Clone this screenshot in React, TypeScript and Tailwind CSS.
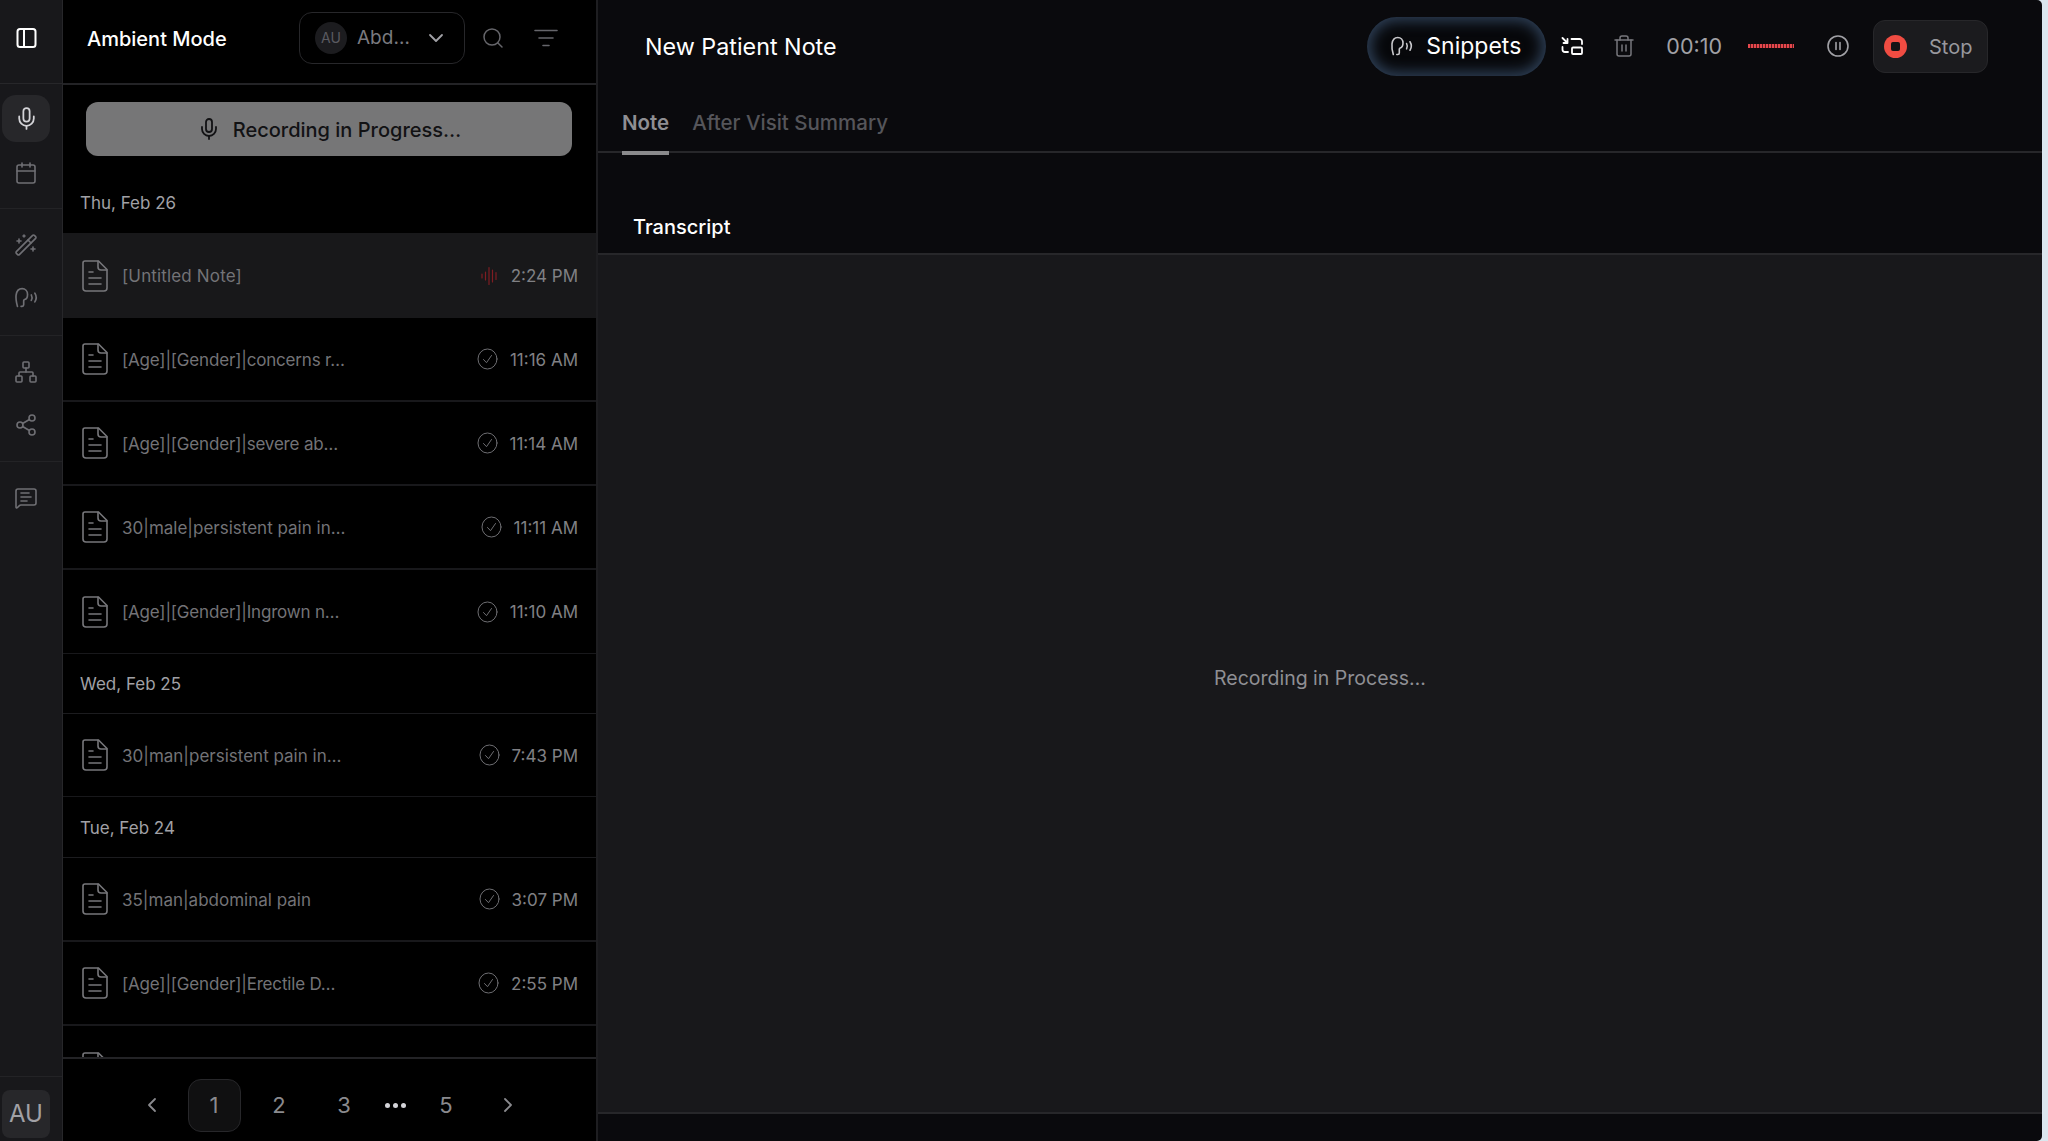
import React from "react";
import { Mic, Calendar, WandSparkles, Network, Share2, MessageSquareText, Search, ChevronDown, ChevronLeft, ChevronRight, Trash2 } from "lucide-react";

function Head({ className }: { className?: string }) {
  return (
    <svg viewBox="0 0 24 24" fill="none" stroke="currentColor" strokeWidth="1.6" strokeLinecap="round" strokeLinejoin="round" className={className}>
      <path d="M3.3 20.5C2.2 16.5 1.6 13 2 9.8 2.5 5.8 4.8 3.5 7.8 3.5c3 0 5.2 2.2 5.2 5.5 0 2.7-1 4.4-2.8 5-.6.2-.9.6-.9 1.2V19c0 1-.6 1.5-1.5 1.5h-1" />
      <path d="M16.6 9.5c.9 1.7.9 3.6 0 5.3" />
      <path d="M20 7.8c1.7 2.7 1.7 5.7 0 8.4" />
    </svg>
  );
}

function DocIcon() {
  return (
    <svg viewBox="0 0 26 32" fill="none" stroke="currentColor" strokeWidth="1.6" strokeLinecap="round" strokeLinejoin="round" className="w-[26px] h-[32px] shrink-0 text-[#77777b]">
      <path d="M3 1h13.5L25 9.5V28a3 3 0 0 1-3 3H4a3 3 0 0 1-3-3V3a2 2 0 0 1 2-2Z" />
      <path d="M16 1.2V7a3 3 0 0 0 3 3h5.8" />
      <path d="M7 12h4M7 18h12M7 24h12" />
    </svg>
  );
}

function CheckIcon() {
  return (
    <svg viewBox="0 0 20 22" fill="none" stroke="currentColor" strokeWidth="1" strokeLinecap="round" strokeLinejoin="round" className="w-[21px] h-[22px] shrink-0 text-[#6e6e72]">
      <ellipse cx="10" cy="11" rx="9.5" ry="10" />
      <path d="M6 11.5l3 3.2 5-7.2" />
    </svg>
  );
}

function WaveIcon() {
  return (
    <svg viewBox="0 0 16 18" fill="none" stroke="currentColor" strokeWidth="1.2" strokeLinecap="round" className="w-[18px] h-[18px] shrink-0 text-[#7f1d22]">
      <path d="M1 7v4M4.5 5v8M8 .6v16.8M11.5 3v12M15 5.5v7" />
    </svg>
  );
}

function SwapIcon() {
  return (
    <svg viewBox="0 0 22 18" fill="none" stroke="currentColor" strokeWidth="1.8" strokeLinecap="round" strokeLinejoin="round" className="w-[22px] h-[18px] text-white">
      <path d="M1.5 1l5 5M6.5 2v4h-4" />
      <path d="M10.5 2h8a2.5 2.5 0 0 1 2.5 2.5V7" />
      <path d="M1.5 10v2.5A2.5 2.5 0 0 0 4 15h3" />
      <rect x="11" y="10.5" width="10" height="6.5" rx="1" />
    </svg>
  );
}

function SideIcon({ children, active }: { children: React.ReactNode; active?: boolean }) {
  return (
    <div className={`w-[48px] h-[47px] flex items-center justify-center rounded-[14px] ${active ? "bg-[#27272a] text-[#d4d4d8]" : "text-[#6f6f74]"}`}>
      {children}
    </div>
  );
}

type Row = { title: string; time: string; size: string };

function NoteRow({ title, time, size }: Row) {
  return (
    <div className={`flex items-center pl-[19px] pr-[18px] border-[#18181b] ${size}`}>
      <DocIcon />
      <span className={`ml-[14px] flex-1 text-[17px] text-[#737377] whitespace-nowrap pt-[3px] ${title.startsWith("[") ? "tracking-[-0.18px]" : ""}`}>{title}</span>
      <CheckIcon />
      <span className="ml-[12px] text-[17px] text-[#808084] whitespace-nowrap pt-[3px]">{time}</span>
    </div>
  );
}

function DateRow({ label, size }: { label: string; size: string }) {
  return (
    <div className={`flex items-center px-[17px] pt-[3px] text-[17px] text-[#a1a1a6] border-[#1c1c1f] ${size}`}>{label}</div>
  );
}

function PageBtn({ children, active, width }: { children: React.ReactNode; active?: boolean; width: string }) {
  return (
    <div className={`h-[53px] flex items-center justify-center rounded-[13px] text-[22px] text-[#8a8a8e] ${width} ${active ? "bg-[#101011] border border-[#27272a]" : ""}`}>
      {children}
    </div>
  );
}

export default function App() {
  return (
    <div className="w-[2048px] h-[1141px] bg-[#dbe6ee] overflow-hidden font-[Inter,sans-serif]">
      <div className="w-[2042px] h-full flex rounded-r-[5px] overflow-hidden">
        {/* Rail */}
        <aside className="w-[63px] shrink-0 bg-[#18181b] border-r border-[#27272a] flex flex-col pl-[2px]">
          <div className="-ml-[2px] pl-[2px] h-[84px] border-b border-[#27272a] flex items-center shrink-0">
            <div className="w-[48px] flex justify-center pb-[8px]">
              <svg viewBox="0 0 20 20" fill="none" stroke="currentColor" strokeWidth="2" className="w-[21px] h-[20px] text-white">
                <rect x="1" y="1" width="18" height="18" rx="2.5" />
                <path d="M7.5 1v18" />
              </svg>
            </div>
          </div>
          <div className="-ml-[2px] pl-[2px] h-[125px] pt-[11px] border-b border-[#232326] flex flex-col gap-[7px] shrink-0">
            <SideIcon active><Mic size={25} strokeWidth={1.7} /></SideIcon>
            <SideIcon><Calendar size={24} strokeWidth={1.6} /></SideIcon>
          </div>
          <div className="-ml-[2px] pl-[2px] h-[127px] pt-[12px] border-b border-[#232326] flex flex-col gap-[6px] shrink-0">
            <SideIcon><WandSparkles size={24} strokeWidth={1.6} /></SideIcon>
            <SideIcon><Head className="w-[25px] h-[25px]" /></SideIcon>
          </div>
          <div className="-ml-[2px] pl-[2px] h-[126px] pt-[12px] border-b border-[#232326] flex flex-col gap-[6px] shrink-0">
            <SideIcon><Network size={24} strokeWidth={1.6} /></SideIcon>
            <SideIcon><Share2 size={24} strokeWidth={1.6} /></SideIcon>
          </div>
          <div className="flex-1 pt-[12px]">
            <SideIcon><MessageSquareText size={24} strokeWidth={1.6} /></SideIcon>
          </div>
          <div className="-ml-[2px] pl-[2px] h-[65px] pt-[10px] border-t border-[#232326] flex items-center shrink-0">
            <div className="w-[48px] h-[48px] rounded-[8px] bg-[#27272a] flex items-center justify-center text-[24px] text-[#a1a1a6]">AU</div>
          </div>
        </aside>

        {/* List */}
        <section className="w-[533px] shrink-0 bg-black flex flex-col">
          <header className="h-[85px] shrink-0 border-b-2 border-[#232326] flex items-center pl-[24px] pb-[8px]">
            <span className="w-[212px] text-[20px] font-medium text-white whitespace-nowrap pt-[3px]">Ambient Mode</span>
            <div className="w-[166px] h-[52px] flex items-center rounded-[13px] border border-[#27272a] pl-[15px] pr-[16px]">
              <div className="w-[32px] h-[32px] rounded-full bg-[#1c1c1f] flex items-center justify-center text-[14px] text-[#5a5a60]">AU</div>
              <span className="ml-[10px] flex-1 text-[19px] text-[#7a7a7f] pt-[2px]">Abd…</span>
              <ChevronDown size={24} strokeWidth={1.8} className="text-[#a1a1a6]" />
            </div>
            <Search size={24} strokeWidth={1.5} className="ml-[16px] text-[#66666b]" />
            <svg viewBox="0 0 24 18" fill="none" stroke="currentColor" strokeWidth="1.6" strokeLinecap="round" className="ml-[29px] w-[24px] h-[18px] text-[#66666b]">
              <path d="M1 1.5h22M5 9h14M9 16.5h6" />
            </svg>
          </header>
          <div className="h-[87px] shrink-0 pt-[17px] px-[23px]">
            <div className="w-[486px] h-[54px] rounded-[12px] bg-[#767677] flex items-center justify-center text-[#121214]">
              <Mic size={24} strokeWidth={1.8} />
              <span className="ml-[12px] text-[20px] font-medium pt-[1px]">Recording in Progress…</span>
            </div>
          </div>
          <div className="flex-1 min-h-0 overflow-hidden">
            <DateRow label="Thu, Feb 26" size="h-[61px]" />
            <div className="h-[85px] flex items-center pl-[19px] pr-[18px] bg-[#18181a]">
              <DocIcon />
              <span className="ml-[14px] flex-1 text-[17px] tracking-[0.15px] text-[#737377] pt-[3px]">[Untitled Note]</span>
              <WaveIcon />
              <span className="ml-[13px] text-[17px] text-[#808084] pt-[3px]">2:24 PM</span>
            </div>
            <NoteRow title="[Age]|[Gender]|concerns r…" time="11:16 AM" size="h-[84px] border-b-2" />
            <NoteRow title="[Age]|[Gender]|severe ab…" time="11:14 AM" size="h-[84px] border-b-2" />
            <NoteRow title="30|male|persistent pain in…" time="11:11 AM" size="h-[84px] border-b-2" />
            <NoteRow title="[Age]|[Gender]|Ingrown n…" time="11:10 AM" size="h-[84px] border-b" />
            <DateRow label="Wed, Feb 25" size="h-[60px] border-b" />
            <NoteRow title="30|man|persistent pain in…" time="7:43 PM" size="h-[83px] border-b" />
            <DateRow label="Tue, Feb 24" size="h-[61px] border-b" />
            <NoteRow title="35|man|abdominal pain" time="3:07 PM" size="h-[84px] border-b-2" />
            <NoteRow title="[Age]|[Gender]|Erectile D…" time="2:55 PM" size="h-[84px] border-b-2" />
            <div className="h-[84px] flex items-center justify-between pl-[19px] pr-[18px]">
              <DocIcon />
              <div className="mr-[78px]"><CheckIcon /></div>
            </div>
          </div>
          <footer className="h-[84px] shrink-0 border-t-2 border-[#232326] pt-[10px] flex items-center justify-center gap-[12px]">
            <PageBtn width="w-[48px]"><ChevronLeft size={24} strokeWidth={1.8} /></PageBtn>
            <PageBtn width="w-[53px]" active>1</PageBtn>
            <PageBtn width="w-[53px]">2</PageBtn>
            <PageBtn width="w-[53px]">3</PageBtn>
            <div className="w-[26px] flex items-center justify-center gap-[3px]">
              <span className="w-[5px] h-[5px] rounded-full bg-[#d4d4d8]" />
              <span className="w-[5px] h-[5px] rounded-full bg-[#d4d4d8]" />
              <span className="w-[5px] h-[5px] rounded-full bg-[#d4d4d8]" />
            </div>
            <PageBtn width="w-[51px]">5</PageBtn>
            <PageBtn width="w-[48px]"><ChevronRight size={24} strokeWidth={1.8} /></PageBtn>
          </footer>
        </section>

        {/* Main */}
        <main className="flex-1 min-w-0 border-l-2 border-[#1e1e21] bg-[#0a0a0d] flex flex-col">
          <div className="h-[92px] shrink-0 flex items-center pl-[47px] pr-[54px]">
            <span className="flex-1 text-[23.3px] text-white pt-[2px]">New Patient Note</span>
            <div className="w-[179px] h-[59px] rounded-full bg-[#07080b] shadow-[inset_0_0_14px_4px_#2f4158] flex items-center pl-[23px]">
              <Head className="w-[24px] h-[24px] text-[#c8c8cc]" />
              <span className="ml-[12px] text-[23px] text-white pt-[1px]">Snippets</span>
            </div>
            <div className="ml-[15px]"><SwapIcon /></div>
            <Trash2 size={24} strokeWidth={1.5} className="ml-[29px] text-[#77777c]" />
            <span className="ml-[30px] text-[21.5px] text-[#a1a1a6] pt-[1px]">00:10</span>
            <div className="ml-[26px] w-[46px] h-[4px] bg-[repeating-linear-gradient(90deg,#e5484d_0_2px,#5f1a1d_2px_3px)]" />
            <svg viewBox="0 0 22 22" fill="none" stroke="currentColor" strokeWidth="1.6" strokeLinecap="round" className="ml-[33px] w-[22px] h-[22px] text-[#a1a1a6]">
              <circle cx="11" cy="11" r="10" />
              <path d="M9 7.5v7M13 7.5v7" />
            </svg>
            <div className="ml-[24px] w-[115px] h-[53px] rounded-[12px] bg-[#1b1b1e] border border-[#27272a] flex items-center pl-[10px]">
              <div className="w-[23px] h-[23px] rounded-full bg-[#f04c42] flex items-center justify-center">
                <div className="w-[9px] h-[9px] rounded-[2px] bg-[#141416]" />
              </div>
              <span className="ml-[22px] text-[20px] text-[#98989d] pt-[1px]">Stop</span>
            </div>
          </div>
          <div className="h-[61px] shrink-0 border-b-2 border-[#27272a] flex items-start pl-[24px] gap-[23px]">
            <div className="h-[63px] pt-[3px] border-b-4 border-[#8a8a8c] flex items-center text-[20.5px] font-semibold text-[#8f8f93]">Note</div>
            <div className="h-[63px] pt-[3px] border-b-4 border-transparent flex items-center text-[20.5px] font-medium text-[#55555a]">After Visit Summary</div>
          </div>
          <div className="h-[102px] shrink-0 border-b-2 border-[#27272a] flex items-end pl-[35px] pb-[11px]">
            <span className="text-[20px] font-medium text-white">Transcript</span>
          </div>
          <div className="flex-1 min-h-0 bg-[#18181b] flex items-center justify-center pb-[9px]">
            <span className="text-[19.5px] text-[#8f8f94]">Recording in Process…</span>
          </div>
          <div className="h-[29px] shrink-0 border-t-2 border-[#27272a]" />
        </main>
      </div>
    </div>
  );
}
